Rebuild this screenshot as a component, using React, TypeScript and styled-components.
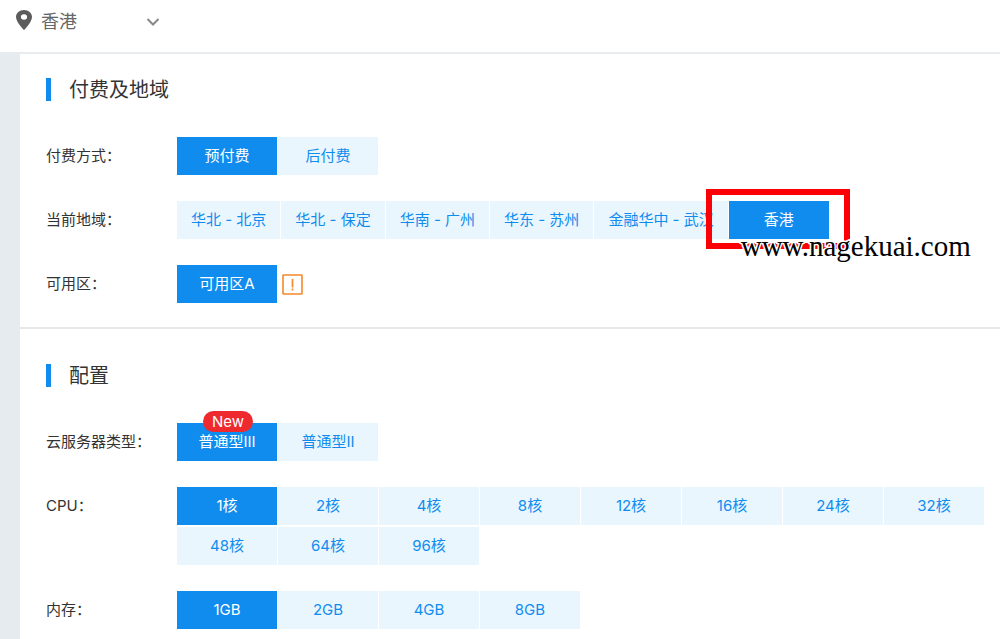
import React, { useState } from "react";
import styled, { createGlobalStyle } from "styled-components";

const GlobalStyle = createGlobalStyle`
  *, *::before, *::after { box-sizing: border-box; }
  html, body, #root { min-height: 100vh; }
  body {
    margin: 0;
    background: #fff;
    color: #333;
    font-family: Inter, "Noto Sans CJK SC", sans-serif;
    font-size: 15px;
    line-height: 22px;
    overflow-x: hidden;
  }
  button, select { font: inherit; }
`;

const Page = styled.div`
  display: flex;
  flex-direction: column;
  min-height: 100vh;
`;

const TopBar = styled.header`
  display: flex;
  align-items: flex-start;
  height: 54px;
  padding: 8px 16px;
  border-bottom: 2px solid #e8ecef;
`;

const RegionPicker = styled.label`
  display: grid;
  grid-template-columns: 16px 119px;
  column-gap: 9px;
  align-items: center;
  color: #666;

  > svg { grid-row: 1; }
`;

const PinIcon = styled.svg`
  width: 16px;
  height: 20px;
  margin-top: -4px;
  fill: #5c5c5c;
`;

const RegionSelect = styled.select`
  grid-row: 1;
  grid-column: 2;
  height: 28px;
  padding: 0;
  border: 0;
  background: transparent;
  color: #666;
  font-size: 18px;
  appearance: none;
`;

const ChevronIcon = styled.svg`
  grid-column: 2;
  justify-self: end;
  width: 14px;
  height: 8px;
  fill: none;
  stroke: #888;
  stroke-width: 2;
  pointer-events: none;
`;

const Body = styled.div`
  display: flex;
  flex: 1;
`;

const Rail = styled.aside`
  flex: 0 0 20px;
  background: #e6ebef;
`;

const Main = styled.main`
  flex: 1;
  min-width: 0;
`;

const Section = styled.section`
  padding: 24px 0 24px 26px;

  & + & {
    padding-top: 35px;
    border-top: 2px solid #e8e8e8;
  }
`;

const SectionTitle = styled.h2`
  height: 23px;
  margin: 0 0 36px;
  padding-left: 18px;
  border-left: 5px solid #108cee;
  font-size: 20px;
  font-weight: 400;
  line-height: 24px;
`;

const Row = styled.div`
  display: flex;
  align-items: flex-start;

  & + & { margin-top: 26px; }
`;

const RowLabel = styled.span`
  flex: 0 0 131px;
  line-height: 38px;
`;

const Options = styled.div`
  display: flex;
  flex-wrap: wrap;
  align-items: center;
  gap: 2px 1px;
`;

const Option = styled.button<{ $active: boolean }>`
  position: relative;
  min-width: 100px;
  height: 38px;
  padding: 0 14px;
  border: 0;
  background: ${(p) => (p.$active ? "#108cee" : "#e9f6fe")};
  color: ${(p) => (p.$active ? "#fff" : "#108cee")};
  white-space: nowrap;
  cursor: pointer;
`;

const Badge = styled.span`
  position: absolute;
  top: -12px;
  left: 26px;
  width: 50px;
  height: 21px;
  border-radius: 11px;
  background: #ee2a2f;
  color: #fff;
  line-height: 21px;
`;

const Warning = styled.svg`
  width: 21px;
  height: 21px;
  margin-left: 4px;
  fill: none;
  stroke: #f5892b;
`;

const Marked = styled.div`
  position: relative;
`;

const MarkFrame = styled.div`
  position: absolute;
  top: -12px;
  left: -23px;
  width: 144px;
  height: 60px;
  border: 6px solid #fb0007;
  pointer-events: none;
`;

const Watermark = styled.span`
  position: absolute;
  top: 29px;
  left: 12px;
  color: #000;
  font-family: "Liberation Serif", serif;
  font-size: 29px;
  line-height: 32px;
  paint-order: stroke;
  -webkit-text-stroke: 3px #fff;
  pointer-events: none;
`;

type Item = { name: string; badge?: string; marked?: boolean };

type FieldProps = {
  label: string;
  items: Item[];
  initial: string;
  children?: React.ReactNode;
};

function Field({ label, items, initial, children }: FieldProps) {
  const [value, setValue] = useState(initial);
  return (
    <Row role="group" aria-label={label}>
      <RowLabel>{label}：</RowLabel>
      <Options>
        {items.map((item) => {
          const option = (
            <Option
              key={item.name}
              type="button"
              $active={item.name === value}
              aria-pressed={item.name === value}
              onClick={() => setValue(item.name)}
            >
              {item.name}
              {item.badge && <Badge>{item.badge}</Badge>}
            </Option>
          );
          return item.marked ? (
            <Marked key={item.name}>
              {option}
              <MarkFrame />
              <Watermark>www.nagekuai.com</Watermark>
            </Marked>
          ) : (
            option
          );
        })}
        {children}
      </Options>
    </Row>
  );
}

const named = (...names: string[]): Item[] => names.map((name) => ({ name }));

const regions: Item[] = [
  ...named("华北 - 北京", "华北 - 保定", "华南 - 广州", "华东 - 苏州", "金融华中 - 武汉"),
  { name: "香港", marked: true },
];

export default function App() {
  return (
    <Page>
      <GlobalStyle />
      <TopBar>
        <RegionPicker>
          <PinIcon viewBox="5 2 14 20" preserveAspectRatio="none" aria-hidden="true">
            <path d="M12 2C8.13 2 5 5.13 5 9c0 5.25 7 13 7 13s7-7.75 7-13c0-3.87-3.13-7-7-7zm0 9.700a2.700 2.700 0 0 1 0-5.400 2.700 2.700 0 0 1 0 5.400z" />
          </PinIcon>
          <RegionSelect aria-label="地域">
            <option>香港</option>
          </RegionSelect>
          <ChevronIcon viewBox="0 0 14 8" aria-hidden="true">
            <path d="M1.5 1 7 6.5 12.5 1" />
          </ChevronIcon>
        </RegionPicker>
      </TopBar>
      <Body>
        <Rail />
        <Main>
          <Section>
            <SectionTitle>付费及地域</SectionTitle>
            <Field label="付费方式" items={named("预付费", "后付费")} initial="预付费" />
            <Field label="当前地域" items={regions} initial="香港" />
            <Field label="可用区" items={named("可用区A")} initial="可用区A">
              <Warning viewBox="0 0 21 21" role="img" aria-label="提示">
                <rect x="1" y="1" width="19" height="19" rx="0.5" strokeWidth="1.6" />
                <path d="M10.500 5v8.500M10.500 14.500v2" strokeWidth="1.7" />
              </Warning>
            </Field>
          </Section>
          <Section>
            <SectionTitle>配置</SectionTitle>
            <Field
              label="云服务器类型"
              items={[{ name: "普通型III", badge: "New" }, { name: "普通型II" }]}
              initial="普通型III"
            />
            <Field
              label="CPU"
              items={named("1核", "2核", "4核", "8核", "12核", "16核", "24核", "32核", "48核", "64核", "96核")}
              initial="1核"
            />
            <Field label="内存" items={named("1GB", "2GB", "4GB", "8GB")} initial="1GB" />
          </Section>
        </Main>
      </Body>
    </Page>
  );
}
